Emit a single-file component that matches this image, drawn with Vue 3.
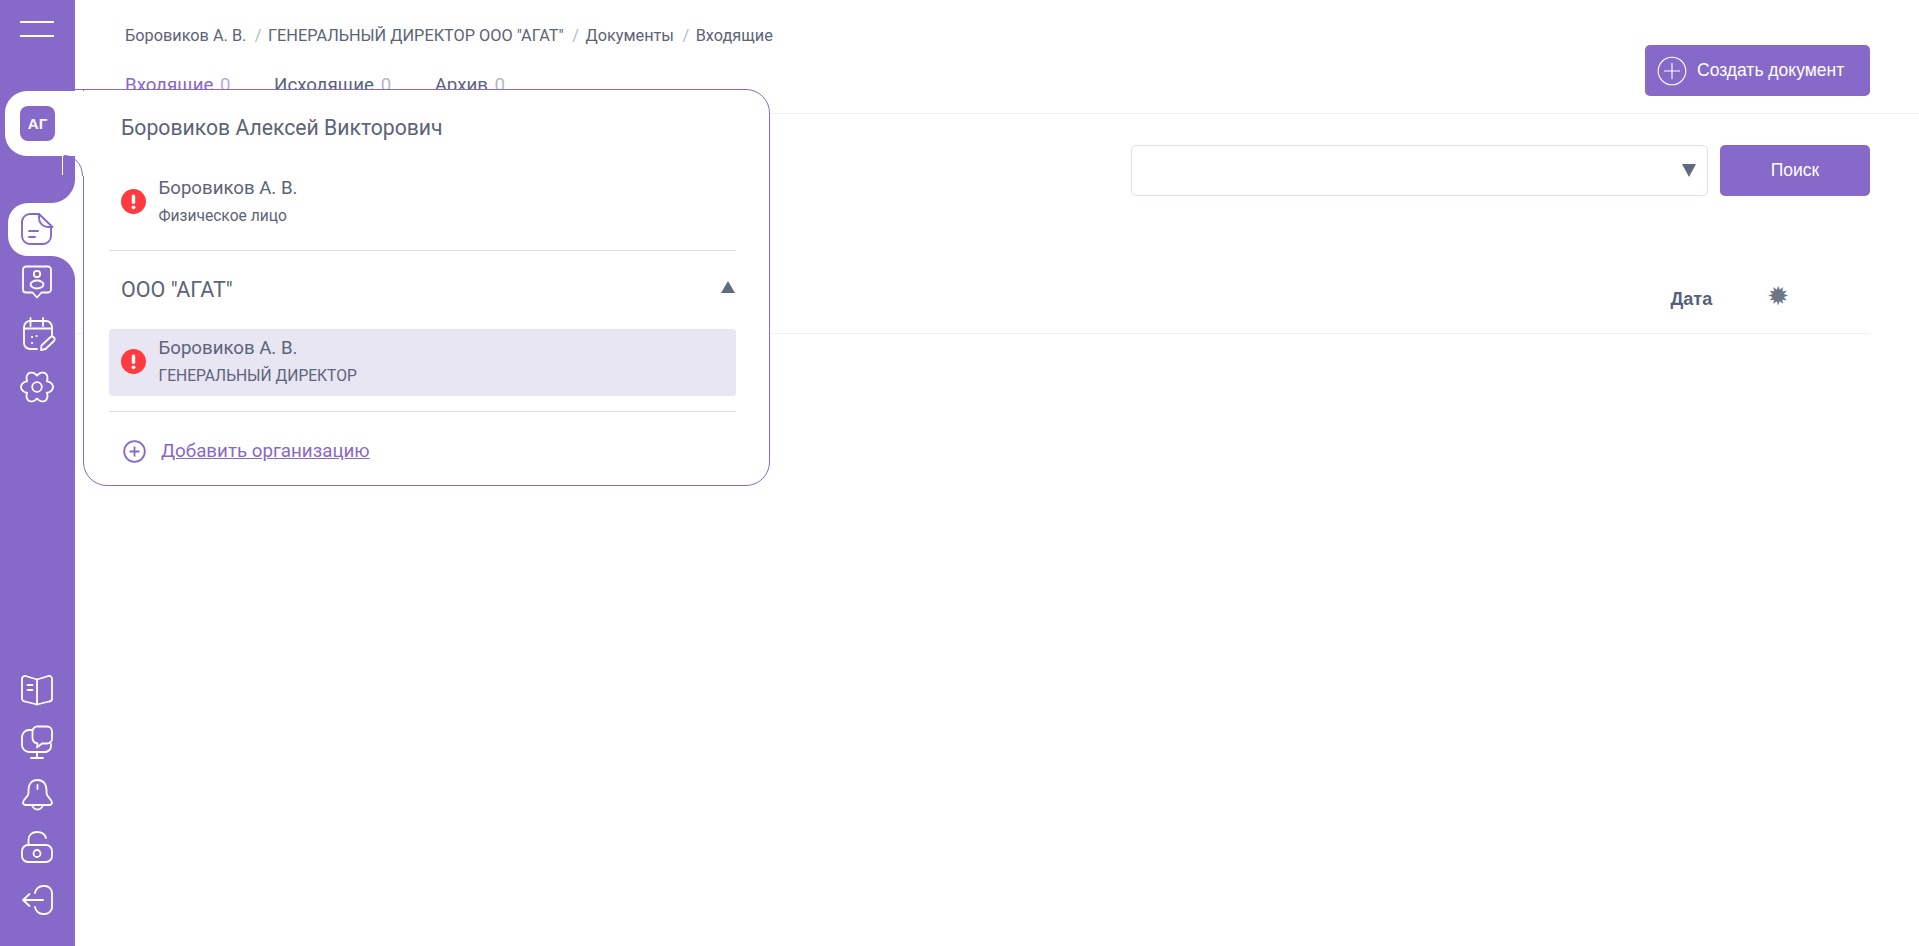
<script setup>
const crumbs = ['Боровиков А. В.', 'ГЕНЕРАЛЬНЫЙ ДИРЕКТОР ООО "АГАТ"', 'Документы', 'Входящие']
const tabs = [
  { name: 'Входящие', count: 0, active: true },
  { name: 'Исходящие', count: 0 },
  { name: 'Архив', count: 0 },
]
// six-lobed cog outline
const cog = Array.from({ length: 145 }, (_, i) => {
  const a = (i / 144) * Math.PI * 2
  const r = 11.4 + 4.6 * Math.abs(Math.cos(3 * a))
  return `${i ? 'L' : 'M'}${(17 + r * Math.cos(a)).toFixed(2)} ${(17 + r * Math.sin(a)).toFixed(2)}`
}).join('') + 'Z'
</script>

<template>
  <div class="app">
    <aside class="sidebar">
      <button class="burger" aria-label="Меню"><i></i><i></i></button>
      <div class="org-tab"><span class="org-tile">АГ</span></div>
      <nav class="nav">
        <a class="nav-item active">
          <svg width="34" height="34" viewBox="0 0 34 34" fill="none" stroke="currentColor" stroke-width="1.900" stroke-linecap="round" stroke-linejoin="round">
            <path d="M19 2H10a8 8 0 0 0-8 8v14a8 8 0 0 0 8 8h13a8 8 0 0 0 8-8v-9" />
            <path d="M19 2v4a9 9 0 0 0 9 9h4.500L19 2z" />
            <path d="M9 19h9M9 25h6" />
          </svg>
        </a>
        <a class="nav-item">
          <svg width="34" height="34" viewBox="0 0 34 34" fill="none" stroke="currentColor" stroke-width="1.800" stroke-linecap="round" stroke-linejoin="round">
            <path d="M6 1.500h22a3 3 0 0 1 3 3v20a3 3 0 0 1-3 3h-6.500L17 32.500l-4.500-5H6a3 3 0 0 1-3-3v-20a3 3 0 0 1 3-3z" />
            <circle cx="17" cy="9" r="3.200" />
            <ellipse cx="17" cy="19.500" rx="6.500" ry="4" />
          </svg>
        </a>
        <a class="nav-item">
          <svg width="36" height="34" viewBox="0 0 36 34" fill="none" stroke="currentColor" stroke-width="1.800" stroke-linecap="round" stroke-linejoin="round">
            <path d="M17 32H10a6 6 0 0 1-6-6V10a6 6 0 0 1 6-6h16a6 6 0 0 1 6 6v9" />
            <path d="M4 11.500h28M10.500 1v8M23 1v8" />
            <path d="M12 20h.1M16.500 19h.1M12 26h.1" stroke-width="2.200" />
            <path d="M21 33l.5-4.500 8.500-8a2.500 2.500 0 0 1 4 3.500l-8.500 8-4.500 1z" />
          </svg>
        </a>
        <a class="nav-item">
          <svg width="34" height="34" viewBox="0 0 34 34" fill="none" stroke="currentColor" stroke-width="1.800" stroke-linejoin="round">
            <circle cx="17" cy="17" r="4.800" />
            <path :d="cog" />
          </svg>
        </a>
      </nav>
      <nav class="nav nav-bottom">
        <a class="nav-item">
          <svg width="34" height="34" viewBox="0 0 34 34" fill="none" stroke="currentColor" stroke-width="1.800" stroke-linecap="round" stroke-linejoin="round">
            <path d="M17 31.500l-12-3a3 3 0 0 1-3-3V6a3 3 0 0 1 3.500-3L17 6.500 28.500 3A3 3 0 0 1 32 6v19.500a3 3 0 0 1-3 3l-12 3z" />
            <path d="M17 6.500v25M7.500 12h5M7.500 17h5" />
          </svg>
        </a>
        <a class="nav-item">
          <svg width="34" height="34" viewBox="0 0 34 34" fill="none" stroke="currentColor" stroke-width="1.800" stroke-linecap="round" stroke-linejoin="round">
            <path d="M12 5H9a7 7 0 0 0-7 7v8a7 7 0 0 0 7 7h16a6 6 0 0 0 6-6v-2" />
            <path d="M18 1.500h9a5 5 0 0 1 5 5v7a5 5 0 0 1-5 5h-5l-5 4 .5-4a6 6 0 0 1-5-5v-7a5 5 0 0 1 5.500-5z" />
            <path d="M17 27v6M11 33h12" />
          </svg>
        </a>
        <a class="nav-item">
          <svg width="34" height="34" viewBox="0 0 34 34" fill="none" stroke="currentColor" stroke-width="1.800" stroke-linecap="round" stroke-linejoin="round">
            <path d="M17.500 2c-6 0-9 4.500-9 10v3c0 4-5.500 6-5.500 9.500 0 1.500 1 2.500 3 2.500h23c2 0 3-1 3-2.500 0-3.500-5.500-5.500-5.500-9.500v-3c0-5.500-3-10-9-10z" />
            <path d="M12 27c1 3 3 4.500 5.500 4.500S22 30 23 27M17.500 7v4" />
          </svg>
        </a>
        <a class="nav-item">
          <svg width="34" height="34" viewBox="0 0 34 34" fill="none" stroke="currentColor" stroke-width="1.800" stroke-linecap="round" stroke-linejoin="round">
            <rect x="2" y="15" width="30" height="17" rx="6" />
            <circle cx="17" cy="23.500" r="3.500" />
            <path d="M8.500 15V9.500C8.500 5 12 2 17 2s8 2.500 9 6" />
          </svg>
        </a>
        <a class="nav-item">
          <svg width="34" height="34" viewBox="0 0 34 34" fill="none" stroke="currentColor" stroke-width="1.800" stroke-linecap="round" stroke-linejoin="round">
            <path d="M15 10a8 8 0 0 1 8-7h2a7 7 0 0 1 7 7v14a7 7 0 0 1-7 7h-2a8 8 0 0 1-8-7" />
            <path d="M23 17H3M9.500 11L3 17l6.500 6" />
          </svg>
        </a>
      </nav>
    </aside>

    <main class="main">
      <header class="head">
        <div>
          <ol class="crumbs">
            <li v-for="c in crumbs" :key="c">{{ c }}</li>
          </ol>
          <div class="tabs">
            <span v-for="t in tabs" :key="t.name" class="tab" :class="{ on: t.active }">
              {{ t.name }} <em>{{ t.count }}</em>
            </span>
          </div>
        </div>
        <button class="btn btn-create">
          <svg width="30" height="30" viewBox="0 0 30 30" fill="none" stroke="#fff" stroke-width="1.100">
            <circle cx="15" cy="15" r="13.800" />
            <path d="M15 7v16M7 15h16" />
          </svg>
          Создать документ
        </button>
      </header>

      <div class="toolbar">
        <div class="select"><span class="caret"></span></div>
        <button class="btn btn-search">Поиск</button>
      </div>

      <div class="thead">
        <span class="th-date">Дата</span>
        <span class="th-gear">✹</span>
      </div>
    </main>

    <section class="popup">
      <div class="p-name">Боровиков Алексей Викторович</div>
      <div class="person">
        <svg class="err" width="25" height="25" viewBox="0 0 25 25"><circle cx="12.500" cy="12.500" r="12.500" fill="#ff3b3f" /><rect x="10.800" y="5.500" width="3.400" height="9.500" rx="1.600" fill="#fff" /><circle cx="12.500" cy="18.300" r="1.900" fill="#fff" /></svg>
        <div><div class="who">Боровиков А. В.</div><div class="role">Физическое лицо</div></div>
      </div>
      <hr class="rule" />
      <div class="org-row"><span>ООО "АГАТ"</span><i class="up"></i></div>
      <div class="person picked">
        <svg class="err" width="25" height="25" viewBox="0 0 25 25"><circle cx="12.500" cy="12.500" r="12.500" fill="#ff3b3f" /><rect x="10.800" y="5.500" width="3.400" height="9.500" rx="1.600" fill="#fff" /><circle cx="12.500" cy="18.300" r="1.900" fill="#fff" /></svg>
        <div><div class="who">Боровиков А. В.</div><div class="role">ГЕНЕРАЛЬНЫЙ ДИРЕКТОР</div></div>
      </div>
      <hr class="rule rule-low" />
      <div class="add">
        <svg width="23" height="23" viewBox="0 0 23 23" fill="none" stroke="#8669c8" stroke-width="1.800"><circle cx="11.500" cy="11.500" r="10.300" /><path d="M11.500 6.500v10M6.500 11.500h10" /></svg>
        <a>Добавить организацию</a>
      </div>
    </section>
    <svg class="joint" width="22" height="21" viewBox="0 0 22 21" fill="none">
      <path d="M13 0h9v21h-9z" fill="#fff" />
      <path d="M.5 0v20" stroke="#fff" />
      <path d="M2 .5C12 .5 20.500 9 20.500 21" stroke="#8669c8" />
    </svg>
  </div>
</template>

<style>
html, body { margin: 0; background: #fff; }
</style>

<style scoped>
.app {
  position: relative;
  display: flex;
  height: 946px;
  overflow: hidden;
  background: #fff;
  font-family: Roboto, "Liberation Sans", sans-serif;
  color: #5b6478;
}

/* sidebar */
.sidebar {
  width: 75px;
  flex: none;
  display: flex;
  flex-direction: column;
  background: #8669c8;
  color: #fff;
}
.burger {
  display: flex;
  flex-direction: column;
  gap: 12px;
  height: 91px;
  padding: 21px 0 0 20px;
  border: 0;
  background: none;
}
.burger i { display: block; width: 34px; height: 2px; background: #fff; }
.org-tab {
  position: relative;
  z-index: 3;
  display: flex;
  align-items: center;
  width: 79px;
  height: 65px;
  margin-left: 5px;
  padding-left: 15px;
  box-sizing: border-box;
  background: #fff;
  border-radius: 22px 0 0 22px;
}
.org-tile {
  width: 35px;
  height: 35px;
  display: grid;
  place-items: center;
  border-radius: 8px;
  background: #8669c8;
  color: #fff;
  font: 700 15px "Liberation Sans", sans-serif;
}
.nav { display: flex; flex-direction: column; margin-top: 47px; }
.nav-item {
  position: relative;
  display: flex;
  align-items: center;
  height: 52.500px;
  padding-left: 20px;
}
.nav-item.active {
  margin-left: 8px;
  padding-left: 12px;
  background: #fff;
  color: #8669c8;
  border-radius: 20px 0 0 20px;
}
.nav-item.active::before,
.nav-item.active::after {
  content: "";
  position: absolute;
  right: 0;
  width: 24px;
  height: 24px;
}
.nav-item.active::before {
  top: -24px;
  background: radial-gradient(circle at 0 0, #8669c8 23.500px, #fff 24.500px);
}
.nav-item.active::after {
  bottom: -24px;
  background: radial-gradient(circle at 0 100%, #8669c8 23.500px, #fff 24.500px);
}
.nav-bottom { margin-top: auto; padding-bottom: 20px; }

/* main */
.main { flex: 1; min-width: 0; }
.head {
  display: flex;
  justify-content: space-between;
  height: 114px;
  padding: 0 49px 0 50px;
  box-sizing: border-box;
  border-bottom: 1px solid #eeecf6;
}
.crumbs {
  display: flex;
  margin: 0;
  padding: 27px 0 0;
  list-style: none;
  font-size: 16.300px;
  line-height: 18px;
}
.crumbs li + li::before { content: "/"; margin: 0 6.500px 0 8.500px; color: #b4b8c4; }
.tabs { display: flex; gap: 43.500px; margin-top: 30px; font-size: 18.700px; line-height: 20px; }
.tab.on { color: #8669c8; }
.tab em { margin-left: 2px; font-style: normal; color: #b4b8c4; }
.tab.on em { color: #b9a8e0; }
.btn {
  border: 0;
  border-radius: 5px;
  background: #8669c8;
  color: #fff;
  font: 17.500px "Liberation Sans", sans-serif;
}
.btn-create {
  display: flex;
  align-items: center;
  gap: 10px;
  width: 225px;
  height: 51px;
  margin-top: 45px;
  padding: 0 0 0 12px;
}
.toolbar {
  display: flex;
  justify-content: flex-end;
  gap: 12px;
  padding: 31px 49px 0 0;
}
.select {
  position: relative;
  width: 577px;
  height: 51px;
  box-sizing: border-box;
  border: 1px solid #e0dcf2;
  border-radius: 5px;
}
.caret {
  position: absolute;
  right: 11px;
  top: 18px;
  border-style: solid;
  border-width: 13px 7.500px 0;
  border-color: #5f6b7e transparent transparent;
}
.btn-search { width: 150px; height: 51px; }
.thead {
  display: flex;
  align-items: center;
  justify-content: flex-end;
  height: 138px;
  margin-right: 49px;
  padding: 69px 81px 0 0;
  box-sizing: border-box;
  border-bottom: 1px solid #f1f0f7;
}
.th-date { margin-right: 1px; font: 700 18px "Liberation Sans", sans-serif; color: #55617a; }
.th-gear { margin: -7px 0 0 54px; font: 26px "DejaVu Sans", sans-serif; line-height: 26px; color: #6b7689; }

/* popup */
.popup {
  position: absolute;
  left: 83px;
  top: 89px;
  z-index: 2;
  width: 687px;
  height: 397px;
  box-sizing: border-box;
  padding: 0 33px 0 25px;
  background: #fff;
  border: 1px solid #8669c8;
  border-radius: 0 24px 24px 24px;
}
.popup::before {
  content: "";
  position: absolute;
  left: -22px;
  top: -1px;
  width: 22px;
  height: 1px;
  background: #8669c8;
}
.p-name {
  height: 76px;
  padding-left: 12px;
  font-size: 21.200px;
  line-height: 76px;
}
.person {
  display: flex;
  align-items: center;
  gap: 12.500px;
  padding-left: 12px;
  height: 70px;
}
.err { flex: none; }
.who { font-size: 18.650px; line-height: 20px; }
.role { margin-top: 10px; font-size: 15.600px; line-height: 17px; }
.rule { height: 1px; margin: 14px 0 0; border: 0; background: #dedaf0; }
.org-row {
  display: flex;
  align-items: center;
  justify-content: space-between;
  height: 78px;
  padding: 0 1px 2px 12px;
  box-sizing: border-box;
  font-size: 21.500px;
}
.up {
  border-style: solid;
  border-width: 0 7px 12px;
  border-color: transparent transparent #5f6b7e;
  margin-bottom: 4px;
}
.picked { height: 67px; padding-bottom: 2px; box-sizing: border-box; background: #e9e6f4; border-radius: 4px; }
.rule-low { margin-top: 15px; }
.add {
  display: flex;
  align-items: center;
  gap: 15px;
  height: 73px;
  padding: 5px 0 0 15px;
  box-sizing: border-box;
}
.add svg { margin-left: -1px; }
.add a { font-size: 18.750px; color: #8669c8; text-decoration: underline; }
.joint { position: absolute; left: 62px; top: 155px; z-index: 3; }
</style>
